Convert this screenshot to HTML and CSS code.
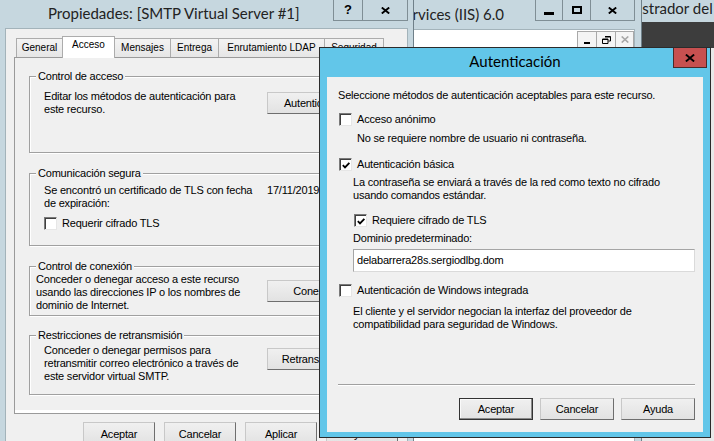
FILE: index.html
```html
<!DOCTYPE html>
<html lang="es">
<head>
<meta charset="utf-8">
<title>Autenticación</title>
<link rel="stylesheet" href="styles.css">
</head>
<body>
<div class="desktop">

  <div class="win srvmgr">
    <div class="srv-title wtitle">Administrador del servidor</div>
    <div class="srv-dark"></div>
    <div class="srv-body"></div>
  </div>

  <div class="win iis">
    <div class="iis-bar">
      <div class="iis-title wtitle"><span>Services (IIS) 6.0</span></div>
      <div class="capbtns">
        <span class="cap cap-min"><i class="g-min"></i></span>
        <span class="cap cap-max"><i class="g-max"></i></span>
        <span class="cap cap-close"><svg width="9" height="7" viewBox="0 0 9 7"><path d="M0.8 0.5L8.2 6.5M8.2 0.5L0.8 6.5" stroke="#000" stroke-width="1.9"/></svg></span>
      </div>
    </div>
    <div class="iis-client">
      <div class="iis-menubar">
        <div class="mdi">
          <span class="mdi-btn"><i class="m-min"></i></span>
          <span class="mdi-btn"><svg width="9" height="8" viewBox="0 0 9 8"><path d="M3 0.5H8.5V5H6.5M0.5 3H6V7.5H0.5Z" fill="none" stroke="#000" stroke-width="1"/><path d="M3 1H8.5M0.5 3.5H6" stroke="#000" stroke-width="1"/></svg></span>
          <span class="mdi-btn mdi-dis"><svg width="8" height="7" viewBox="0 0 8 7"><path d="M0.7 0.5L7.3 6.5M7.3 0.5L0.7 6.5" stroke="#a6a6a6" stroke-width="1.6"/></svg></span>
        </div>
      </div>
    </div>
  </div>

  <div class="win props">
    <div class="props-bar">
      <div class="props-title wtitle">Propiedades: [SMTP Virtual Server #1]</div>
      <div class="capbtns">
        <span class="cap cap-help"><span class="q">?</span></span>
        <span class="cap cap-pclose"><svg width="9" height="7" viewBox="0 0 9 7"><path d="M0.8 0.5L8.2 6.5M8.2 0.5L0.8 6.5" stroke="#000" stroke-width="1.9"/></svg></span>
      </div>
    </div>
    <div class="props-client">
      <div class="tabs">
        <div class="tab t-general">General</div>
        <div class="tab sel t-acceso">Acceso</div>
        <div class="tab t-mensajes">Mensajes</div>
        <div class="tab t-entrega">Entrega</div>
        <div class="tab t-ldap">Enrutamiento LDAP</div>
        <div class="tab t-seg">Seguridad</div>
      </div>
      <div class="tabpage">
        <div class="page">
          <div class="grp g1">
            <div class="grp-label">Control de acceso</div>
            <div class="grp-row r1">
              <p class="desc">Editar los métodos de autenticación para<br>este recurso.</p>
              <button class="btn side b1">Autenticación...</button>
            </div>
          </div>

          <div class="grp g2">
            <div class="grp-label">Comunicación segura</div>
            <div class="grp-row r2">
              <p class="desc">Se encontró un certificado de TLS con fecha<br>de expiración:</p>
              <span class="date">17/11/2019</span>
            </div>
            <label class="cbrow cb-tls"><span class="cb"></span>Requerir cifrado TLS</label>
          </div>

          <div class="grp g3">
            <div class="grp-label">Control de conexión</div>
            <div class="grp-row r3">
              <p class="desc desc3">Conceder o denegar acceso a este recurso<br>usando las direcciones IP o los nombres de<br>dominio de Internet.</p>
              <button class="btn side b3">Conexión...</button>
            </div>
          </div>

          <div class="grp g4">
            <div class="grp-label">Restricciones de retransmisión</div>
            <div class="grp-row r4">
              <p class="desc">Conceder o denegar permisos para<br>retransmitir correo electrónico a través de<br>este servidor virtual SMTP.</p>
              <button class="btn side b4">Retransmisión...</button>
            </div>
          </div>
        </div>
      </div>
      <div class="dlg-btns">
        <button class="btn">Aceptar</button>
        <button class="btn">Cancelar</button>
        <button class="btn">Aplicar</button>
        <button class="btn">Ayuda</button>
      </div>
    </div>
  </div>

  <div class="win auth">
    <div class="auth-bar">
      <span class="auth-title wtitle">Autenticación</span>
      <span class="auth-close"><svg width="10" height="8" viewBox="0 0 10 8"><path d="M0.9 0.6L9.1 7.4M9.1 0.6L0.9 7.4" stroke="#000" stroke-width="2"/></svg></span>
    </div>
    <div class="auth-client">
      <p class="a-intro">Seleccione métodos de autenticación aceptables para este recurso.</p>
      <label class="cbrow a-cb1"><span class="cb"></span>Acceso anónimo</label>
      <p class="a-note1">No se requiere nombre de usuario ni contraseña.</p>
      <label class="cbrow a-cb2"><span class="cb"><svg width="11" height="11" viewBox="0 0 11 11"><path d="M2 5.2L4.4 7.6L9.2 2.6" fill="none" stroke="#000" stroke-width="2"/></svg></span>Autenticación básica</label>
      <p class="a-basic">La contraseña se enviará a través de la red como texto no cifrado<br>usando comandos estándar.</p>
      <label class="cbrow a-cb3"><span class="cb"><svg width="11" height="11" viewBox="0 0 11 11"><path d="M2 5.2L4.4 7.6L9.2 2.6" fill="none" stroke="#000" stroke-width="2"/></svg></span>Requiere cifrado de TLS</label>
      <p class="a-dom">Dominio predeterminado:</p>
      <div class="a-input">delabarrera28s.sergiodlbg.dom</div>
      <label class="cbrow a-cb4"><span class="cb"></span>Autenticación de Windows integrada</label>
      <p class="a-win">El cliente y el servidor negocian la interfaz del proveedor de<br>compatibilidad para seguridad de Windows.</p>
      <div class="a-sep"></div>
      <div class="a-btns">
        <button class="btn def">Aceptar</button>
        <button class="btn">Cancelar</button>
        <button class="btn">Ayuda</button>
      </div>
    </div>
  </div>

</div>
</body>
</html>
```

FILE: styles.css
```css
* { box-sizing: border-box; }
html, body { margin: 0; padding: 0; }
body {
  width: 714px;
  height: 441px;
  overflow: hidden;
  background: #3c3c3c;
  font-family: "Liberation Sans", Arial, sans-serif;
  font-size: 11px;
  line-height: 13px;
  letter-spacing: -0.2px;
  color: #000;
}
p { margin: 0; }
.desktop { position: relative; width: 714px; height: 441px; overflow: hidden; }
.win { position: absolute; }
.wtitle {
  font-family: Lato, "Noto Sans", sans-serif;
  font-size: 15px;
  letter-spacing: 0;
  white-space: nowrap;
  color: #222;
}

/* ---------- Server manager (far back) ---------- */
.srvmgr {
  left: 560px; top: -7px; width: 200px; height: 460px;
  border: 1px solid #6f8089;
  background: #c6d7df;
}
.srv-title { height: 28px; line-height: 28px; padding-left: 35px; }
.srv-dark { height: 26px; background: #3d3d3d; }
.srv-body { height: 400px; background: #e9e9e9; }

/* ---------- IIS manager ---------- */
.iis {
  left: 40px; top: -1px; width: 602px; height: 470px;
  border: 1px solid #6f8089;
  background: #c6d7df;
  padding: 0 6px;
}
.iis-bar { height: 29px; display: flex; align-items: flex-start; }
.iis-title {
  flex: 1; min-width: 0;
  display: flex; justify-content: flex-end;
  padding-right: 32px;
  line-height: 29px;
  overflow: hidden;
}
.capbtns { display: flex; }
.cap {
  height: 21px;
  border: 1px solid #7f8e95;
  border-top: 0;
  margin-left: -1px;
  display: flex; align-items: center; justify-content: center;
}
.cap-min { width: 28px; }
.cap-max { width: 29px; }
.cap-close { width: 45px; }
.g-min { width: 10px; height: 3px; background: #000; margin-top: 6px; }
.g-max { width: 10px; height: 8px; border: 2px solid #000; }
.iis-client {
  height: 440px;
  background: #fff;
  border: 1px solid #a3b3ba;
}
.iis-menubar { height: 18px; display: flex; justify-content: flex-end; align-items: flex-start; }
.mdi { display: flex; margin-top: 1px; background: #f0f0f0; }
.mdi-btn {
  width: 20px; height: 17px;
  margin-left: -1px;
  border: 1px solid #a9a9a9;
  background: #f4f4f4;
  display: flex; align-items: center; justify-content: center;
}
.mdi-btn:last-child { width: 19px; }
.m-min { width: 6px; height: 2px; background: #000; margin-top: 7px; }

/* ---------- Properties dialog ---------- */
.props {
  left: -1px; top: -1px; width: 415px; height: 470px;
  border: 1px solid #6f8089;
  background: #c6d7df;
  padding: 0 5px;
}
.props-bar { height: 28px; display: flex; align-items: flex-start; }
.props-title { flex: 1; padding-left: 43px; line-height: 26px; }
.cap-help { width: 30px; margin-left: 0; }
.cap-pclose { width: 46px; }
.q { font-family: "Liberation Sans", Arial, sans-serif; font-weight: bold; font-size: 13px; letter-spacing: 0; margin-top: -1px; }
.props-client {
  height: 440px;
  background: #f0f0f0;
  border: 1px solid #a3b3ba;
}
.tabs { display: flex; align-items: flex-end; height: 21px; margin: 7px 0 0 10px; }
.tab {
  height: 19px;
  border: 1px solid #acacac;
  border-bottom: 0;
  margin-right: -1px;
  background: linear-gradient(#f3f3f3, #e6e6e6);
  font-size: 10px;
  letter-spacing: 0;
  line-height: 18px;
  text-align: center;
  white-space: nowrap;
}
.tab.sel {
  height: 22px;
  margin-bottom: -1px;
  background: #fff;
  position: relative;
  z-index: 1;
  line-height: 16px;
}
.t-general { width: 47px; }
.t-acceso { width: 53px; }
.t-mensajes { width: 57px; }
.t-entrega { width: 49px; }
.t-ldap { width: 107px; }
.t-seg { width: 60px; }
.tabpage {
  margin-left: 8px;
  width: 385px;
  height: 357px;
  border: 1px solid #9a9a9a;
  background: #fff;
}
.page { height: 352px; background: #f0f0f0; padding-top: 18px; }

.grp {
  width: 355px;
  margin-left: 14px;
  border: 1px solid #a0a0a0;
  box-shadow: inset 1px 1px 0 #fff, 1px 1px 0 #fff;
}
.grp-label {
  display: table;
  margin: -7px 0 0 6px;
  padding: 0 2px;
  background: #f0f0f0;
  line-height: 13px;
  white-space: nowrap;
}
.g1 { height: 77px; }
.g2 { height: 73px; margin-top: 20px; }
.g3 { height: 50px; margin-top: 20px; }
.g4 { height: 60px; margin-top: 19px; }
.grp-row { display: flex; align-items: flex-start; padding-left: 14px; }
.desc { width: 223px; flex: none; white-space: nowrap; }
.r1 { margin-top: 7px; }
.b1 { margin-top: 2px; }
.r2 { margin-top: 4px; }
.date { white-space: nowrap; }
.cb-tls { margin: 7px 0 0 14px; }
.r3 { padding-left: 6px; }
.desc3 { width: 231px; }
.b3 { margin-top: 7px; }
.r4 { margin-top: 2px; }
.b4 { margin-top: 4px; }

.btn {
  display: flex; align-items: center; justify-content: center;
  height: 22px;
  padding: 0;
  border: 1px solid;
  border-color: #c8c8c8 #6e6e6e #6e6e6e #c8c8c8;
  background: linear-gradient(#f0f0f0, #e2e2e2);
  font-family: "Liberation Sans", Arial, sans-serif;
  font-size: 11px;
  letter-spacing: -0.2px;
  color: #000;
  white-space: nowrap;
}
.side { width: 106px; flex: none; }
.dlg-btns { display: flex; gap: 9px; margin: 8px 0 0 77px; }
.dlg-btns .btn { width: 72px; height: 23px; flex: none; }

/* ---------- checkboxes ---------- */
.cbrow { display: flex; align-items: center; gap: 5px; height: 13px; white-space: nowrap; }
.cb {
  width: 13px; height: 13px; flex: none;
  border: 1px solid;
  border-color: #7a7a7a #e6e6e6 #e6e6e6 #7a7a7a;
  box-shadow: inset 1px 1px 0 #3f3f3f;
  background: #fff;
  display: flex; align-items: center; justify-content: center;
}
.cb svg { margin: 1px 0 0 1px; }

/* ---------- Authentication dialog ---------- */
.auth {
  left: 319px; top: 47px; width: 392px; height: 391px;
  border: 1px solid #2b2b2b;
  background: #62c6e9;
  padding: 0 7px 5px;
}
.auth-bar { height: 29px; position: relative; text-align: center; line-height: 27px; }
.auth-title { color: #000; }
.auth-close {
  position: absolute;
  right: -4px; top: 0;
  width: 34px; height: 20px;
  background: #c75050;
  border: 1px solid #4a2a2a;
  border-top: 0;
  display: flex; align-items: center; justify-content: center;
}
.auth-client {
  height: 355px;
  background: #f0f0f0;
  padding: 12px 8px 0 11px;
}
.a-cb1 { margin: 11px 0 0 1px; }
.a-note1 { margin: 6px 0 0 19px; }
.a-cb2 { margin: 13px 0 0 1px; }
.a-basic { margin: 5px 0 0 15px; }
.a-cb3 { margin: 12px 0 0 16px; }
.a-dom { margin: 5px 0 0 15px; }
.a-input {
  margin: 4px 0 0 15px;
  width: 342px; height: 23px;
  padding: 0 3px;
  border: 1px solid;
  border-color: #a5a5a5 #dadada #dadada #a5a5a5;
  background: #fff;
  line-height: 21px;
  white-space: nowrap;
}
.a-cb4 { margin: 12px 0 0 1px; }
.a-win { margin: 8px 0 0 15px; }
.a-sep { margin-top: 53px; height: 2px; border-top: 1px solid #a0a0a0; border-bottom: 1px solid #fff; }
.a-btns { display: flex; justify-content: flex-end; gap: 7px; margin-top: 12px; }
.a-btns .btn { width: 74px; flex: none; }
.btn.def { border-color: #333; box-shadow: inset -1px -1px 0 #8a8a8a, inset 1px 1px 0 #fafafa; }
```
